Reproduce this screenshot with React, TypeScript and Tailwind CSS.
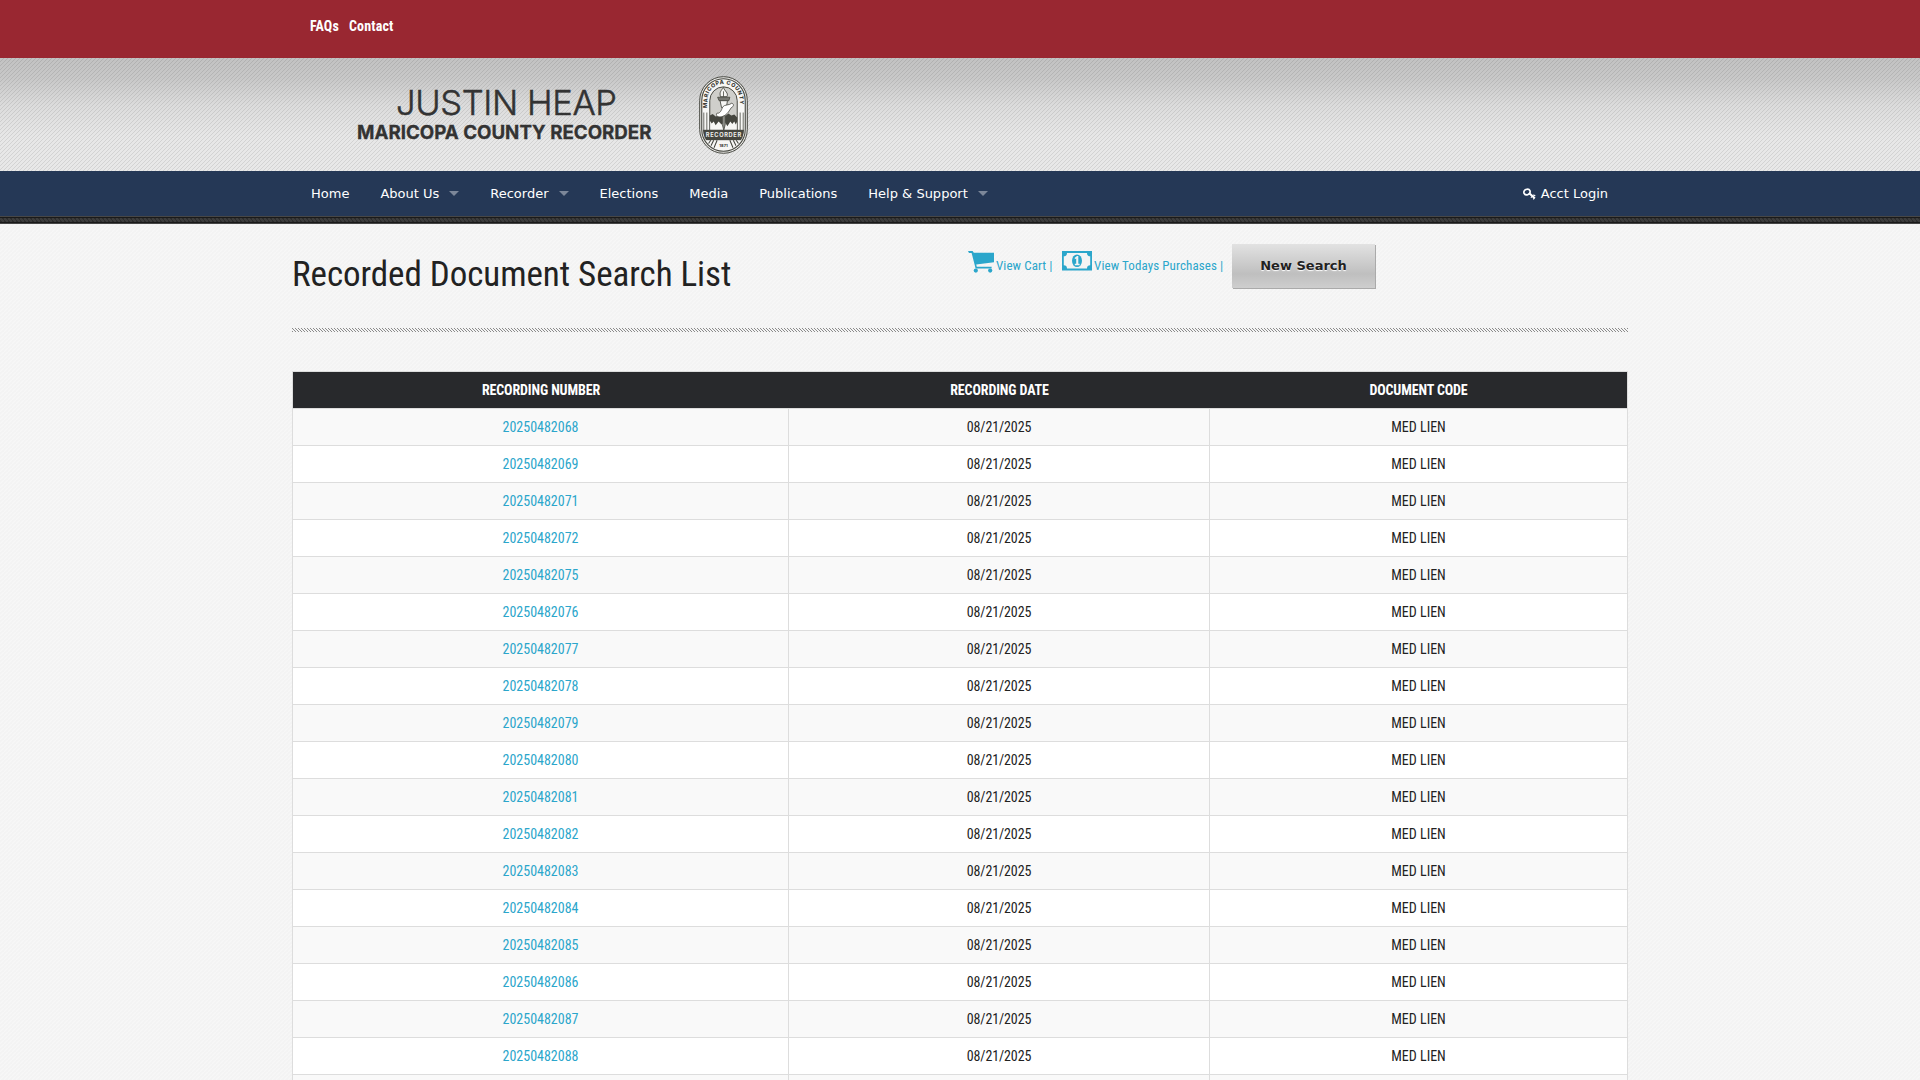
import React from "react";

const documents = [
  "20250482068", "20250482069", "20250482071", "20250482072", "20250482075", "20250482076",
  "20250482077", "20250482078", "20250482079", "20250482080", "20250482081", "20250482082",
  "20250482083", "20250482084", "20250482085", "20250482086", "20250482087", "20250482088",
];

const menu: { label: string; sub?: boolean }[] = [
  { label: "Home" },
  { label: "About Us", sub: true },
  { label: "Recorder", sub: true },
  { label: "Elections" },
  { label: "Media" },
  { label: "Publications" },
  { label: "Help & Support", sub: true },
];

function Seal() {
  return (
    <svg width="49" height="78" viewBox="0 0 50 79" preserveAspectRatio="none" className="block">
      <defs>
        <path id="arch" d="M8.600 32.500V24.500A16.400 16.400 0 0 1 41.400 24.500V40" />
        <clipPath id="inside"><rect x="4" y="4" width="42" height="71" rx="21" /></clipPath>
      </defs>
      <rect x="0.700" y="0.700" width="48.600" height="77.600" rx="24.300" fill="#e6e6e3" stroke="#45463f" strokeWidth="1" />
      <rect x="2.800" y="2.800" width="44.400" height="73.400" rx="22.200" fill="#f7f7f5" stroke="#45463f" strokeWidth="1.100" />
      <text fontFamily="Inter, sans-serif" fontWeight="800" fontSize="5.600" letterSpacing="0.450" fill="#3c3d37">
        <textPath href="#arch">MARICOPA COUNTY</textPath>
      </text>
      <g clipPath="url(#inside)">
        <path d="M11 55V25A14 14 0 0 1 39 25V55Z" fill="#cfcfcb" stroke="#45463f" strokeWidth="1" />
        <path d="M4.900 37V55M8 37V55M42 37V55M45.100 37V55" stroke="#45463f" strokeWidth="0.800" />
        <path d="M11.500 46H38.500V54.500H11.500Z" fill="#f7f7f5" />
        <path d="M11 40L14 38.500 17 41 21 39.500 25 42 30 38 33 40 36 39 39 42V46L37.500 49 36 46 34 48.500 32 46 29 51 26 46 23 49 20 46 17 50 15 46 13 48 11 45Z" fill="#45463f" />
        <path d="M25 11.500C22.500 15 20.500 16.500 22 21H28.500C30.500 17 26 15.500 25 11.500Z" fill="#f7f7f5" stroke="#45463f" strokeWidth="0.900" />
        <path d="M25 15.500V21" stroke="#45463f" strokeWidth="0.800" />
        <path d="M19 21.500H31.500L30.500 25H20.500Z" fill="#777872" stroke="#45463f" strokeWidth="0.800" />
        <path d="M21.500 25H29L28 32H23Z" fill="#f7f7f5" stroke="#45463f" strokeWidth="0.900" />
        <path d="M23.800 40H26.800V49L25.300 55 23.800 49Z" fill="#8b8c86" stroke="#45463f" strokeWidth="0.800" />
        <path d="M18.500 37.500C21 38.500 23 35 24 31.500C26 28.500 31 30 33.500 27.500C36 28.500 35.500 31 33 32L30 36.500C27 40.500 22 42.500 19 41C17.500 40 17.500 38.500 18.500 37.500Z" fill="#fff" stroke="#45463f" strokeWidth="0.800" />
        <rect x="2" y="54.500" width="46" height="10.500" fill="#45463f" />
        <path d="M15 65L9 77M18.500 65L13.500 77M12 65L6 74M35 65L41 77M31.500 65L36.500 77M38 65L44 74" stroke="#45463f" strokeWidth="1.100" />
      </g>
      <text x="25" y="61.900" textAnchor="middle" textLength="36" fontFamily="Inter, sans-serif" fontWeight="700" fontSize="5.800" fill="#efefed">RECORDER</text>
      <text x="25" y="72" textAnchor="middle" textLength="8.500" fontFamily="Inter, sans-serif" fontWeight="800" fontSize="4" fill="#3c3d37">1871</text>
    </svg>
  );
}

function CartIcon() {
  return (
    <svg width="27" height="22" viewBox="0 0 27 22" fill="#2ba6cb" className="block">
      <path d="M0 0H4.600L5.800 1.800H26V11.200L8.200 13.600 8.800 15.800H23.600V17.600H7.600L3.600 1.900H1Z" />
      <circle cx="7.800" cy="19.600" r="2.100" />
      <circle cx="22.200" cy="19.600" r="2.100" />
    </svg>
  );
}

function BillIcon() {
  return (
    <svg width="30" height="20" viewBox="0 0 30 20" className="block">
      <rect width="30" height="19.500" fill="#2ba6cb" />
      <path d="M5 2H25C25 4.200 26.200 5.300 28.200 5.300V14.200C26.200 14.200 25 15.300 25 17.500H5C5 15.300 3.800 14.200 1.800 14.200V5.300C3.800 5.300 5 4.200 5 2Z" fill="#f4f4f4" />
      <ellipse cx="15" cy="9.800" rx="5" ry="6.300" fill="#2ba6cb" />
      <path d="M12.800 6.800L15 5H16.300V12.800H17.600V14.200H12.800V12.800H14.200V7.600L12.800 8.300Z" fill="#f4f4f4" />
    </svg>
  );
}

function KeyIcon() {
  return (
    <svg width="13" height="12" viewBox="0 0 13 12" fill="none" stroke="#fff" className="block">
      <ellipse cx="4" cy="4" rx="3.200" ry="2.700" strokeWidth="1.700" transform="rotate(-25 4 4)" />
      <path d="M6.300 5.200L11.800 10.300" strokeWidth="2" />
      <path d="M9.200 8.300L7.900 9.700M11.300 10.200L10.300 11.400M10 7L12.300 7.600" strokeWidth="1.200" />
    </svg>
  );
}

export default function App() {
  return (
    <div className="h-[1080px] w-full overflow-hidden bg-[#f3f3f3] bg-[linear-gradient(135deg,transparent_30%,#f7f7f7_45%,#f7f7f7_55%,transparent_70%)] bg-[length:4px_4px] font-['Roboto_Condensed',Roboto,sans-serif] text-[#222]">
      <div className="h-[58px] bg-[#992731]">
        <div className="mx-auto flex w-[1336px] gap-[10px] pl-[18px] pt-[16px] text-[14px] font-bold leading-[21px] tracking-[0.150px] text-white">
          <a>FAQs</a>
          <a>Contact</a>
        </div>
      </div>

      <header className="h-[113px] bg-[linear-gradient(135deg,transparent_38%,rgba(0,0,0,0.09)_38%,rgba(0,0,0,0.09)_62%,transparent_62%),linear-gradient(to_bottom,#c2c2c2_0,#c8c8c8_18%,#dcdcdc_42%,#e7e7e7_70%,#e8e8e8_100%)] bg-[length:4px_4px,100%_100%]">
        <div className="mx-auto flex w-[1336px] pt-[18px]">
          <svg width="300" height="79" viewBox="0 0 300 79" className="ml-[64px] block" fill="#333" fontFamily="Inter, sans-serif">
            <text x="40" y="39" textLength="221" fontSize="34.500" fontWeight="300" stroke="#333" strokeWidth="0.500">JUSTIN HEAP</text>
            <text x="1" y="63" textLength="294.500" lengthAdjust="spacingAndGlyphs" fontSize="18.800" fontWeight="700" stroke="#333" strokeWidth="0.300">MARICOPA COUNTY RECORDER</text>
          </svg>
          <div className="ml-[43px]">
            <Seal />
          </div>
        </div>
      </header>

      <nav className="h-[45px] bg-[#253856] font-['DejaVu_Sans',sans-serif] text-[13px] leading-[45px] text-white">
        <div className="mx-auto flex w-[1336px] justify-between pl-[4px] pr-[5px]">
          <ul className="flex gap-px">
            {menu.map((m) => (
              <li key={m.label} className="flex items-center px-[15px]">
                {m.label}
                {m.sub && <span className="ml-[10px] border-x-[5px] border-t-[5px] border-x-transparent border-t-white/40" />}
              </li>
            ))}
          </ul>
          <a className="flex items-center gap-[5px] px-[15px]">
            <KeyIcon />
            Acct Login
          </a>
        </div>
      </nav>
      <div className="h-[8px] border-y border-[#464646] bg-[#1a1a1a] py-[1px]">
        <div className="h-[4px] bg-[#2c2c2c] bg-[linear-gradient(45deg,transparent_35%,#3c3c3c_35%,#3c3c3c_65%,transparent_65%)] bg-[length:4px_4px]" />
      </div>

      <main className="mx-auto w-[1336px]">
        <div className="flex h-[104px]">
          <h1 className="w-[676px] pt-[26px] text-[35px] leading-[49px] tracking-[-0.050px]">Recorded Document Search List</h1>
          <div className="flex pt-[20px] text-[13px] leading-[20px] text-[#2ba6cb]">
            <a className="flex pt-[7px]">
              <CartIcon />
              <span className="ml-[1px] w-[57px] pt-[5px] tracking-[0.080px]">View Cart |</span>
            </a>
            <a className="ml-[9px] flex pt-[7px]">
              <BillIcon />
              <span className="ml-[2px] w-[130px] pt-[5px] tracking-[0.100px]">View Todays Purchases |</span>
            </a>
            <button className="ml-[8px] h-[44px] w-[143px] bg-[linear-gradient(to_bottom,#e2e2e2_0%,#bfbfbf_68%,#cecece_100%)] font-['DejaVu_Sans',sans-serif] text-[13px] font-bold text-[#222] shadow-[1px_1px_0_#aaa] [text-shadow:0_1px_1px_#fff]">
              New Search
            </button>
          </div>
        </div>
        <div className="h-[4px] bg-[linear-gradient(45deg,transparent_34%,#8c8c8c_34%,#8c8c8c_66%,transparent_66%)] bg-[length:3px_3px]" />

        <table className="mt-[39px] w-[1336px] table-fixed border-separate border-spacing-0 border-l border-t border-[#ddd] bg-white text-center text-[14px] leading-[18px]">
          <colgroup>
            <col className="w-[496px]" />
            <col className="w-[421px]" />
            <col className="w-[418px]" />
          </colgroup>
          <thead>
            <tr className="h-[37px] bg-[#28292c] tracking-[-0.120px] text-white">
              <th className="border-b border-[#ddd] p-0 font-bold">RECORDING NUMBER</th>
              <th className="border-b border-[#ddd] p-0 font-bold">RECORDING DATE</th>
              <th className="border-b border-r border-[#ddd] p-0 font-bold">DOCUMENT CODE</th>
            </tr>
          </thead>
          <tbody>
            {documents.map((n) => (
              <tr key={n} className="h-[37px] odd:bg-[#f9f9f9]">
                <td className="border-b border-r border-[#ddd] p-0 text-[#2ba6cb]">{n}</td>
                <td className="border-b border-r border-[#ddd] p-0 tracking-[-0.120px]">08/21/2025</td>
                <td className="border-b border-r border-[#ddd] p-0">MED LIEN</td>
              </tr>
            ))}
            <tr className="h-[37px] bg-[#f9f9f9]">
              <td className="border-r border-[#ddd] p-0" />
              <td className="border-r border-[#ddd] p-0" />
              <td className="border-r border-[#ddd] p-0" />
            </tr>
          </tbody>
        </table>
      </main>
    </div>
  );
}
